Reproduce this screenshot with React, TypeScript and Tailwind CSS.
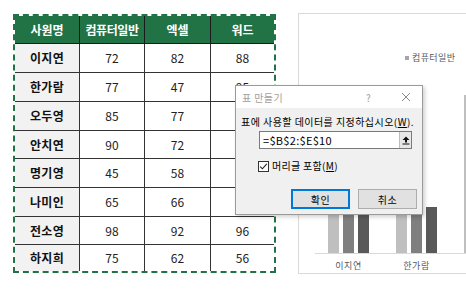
import React from "react";

const rows: [string, number, number, number][] = [
  ["이지연", 72, 82, 88],
  ["한가람", 77, 47, 95],
  ["오두영", 85, 77, 80],
  ["안치연", 90, 72, 85],
  ["명기영", 45, 58, 70],
  ["나미인", 65, 66, 73],
  ["전소영", 98, 92, 96],
  ["하지희", 75, 62, 56],
];
const rowH = [29, 29, 29, 28, 29, 29, 28, 26];

const font = { fontFamily: '"Noto Sans CJK KR", "Noto Sans", sans-serif' };

function Bars({ h }: { h: [number, number, number] }) {
  return (
    <div className="flex items-end gap-[4px] w-[41px] shrink-0">
      <div className="w-[11px] bg-[#bfbfbf]" style={{ height: h[0] }} />
      <div className="w-[11px] bg-[#7f7f7f]" style={{ height: h[1] }} />
      <div className="w-[11px] bg-[#595959]" style={{ height: h[2] }} />
    </div>
  );
}

export default function App() {
  return (
    <div
      className="relative w-[466px] h-[291px] overflow-hidden bg-white flex items-start"
      style={font}
    >
      {/* Table */}
      <div className="ml-[13px] mt-[14px] shrink-0 border-2 border-dashed border-[#217346]">
        <div className="grid grid-cols-[64px_65px_66px_64px]">
          {["사원명", "컴퓨터일반", "엑셀", "워드"].map((t, i) => (
            <div
              key={t}
              className={`h-[28px] bg-[#217346] text-white font-bold text-[12px] flex items-center justify-center border-b border-[#1a1a1a] ${
                i > 0 ? "border-l" : ""
              } ${i === 1 ? "tracking-[-0.4px]" : ""}`}
            >
              {t}
            </div>
          ))}
          {rows.map((r, ri) =>
            r.map((v, ci) => (
              <div
                key={`${ri}-${ci}`}
                style={{ height: rowH[ri] }}
                className={`flex items-center justify-center border-[#333333] ${
                  ri < rows.length - 1 ? "border-b" : ""
                } ${ci > 0 ? "border-l" : ""} ${
                  ci === 0
                    ? "bg-[#f2f2f2] font-bold text-[12px] text-[#111] tracking-[0.3px]"
                    : "bg-white text-[12px] text-[#222]"
                }`}
              >
                {v}
              </div>
            ))
          )}
        </div>
      </div>

      {/* Chart */}
      <div className="ml-[22px] mt-[13px] w-[200px] h-[261px] shrink-0 border border-[#d9d9d9] flex flex-col">
        <div className="h-[40px] pt-[26px] pl-[106px] flex items-center gap-[3px] text-[9px] tracking-[0.4px] text-[#595959] leading-[14px] box-content">
          <span className="w-[4px] h-[4px] bg-[#a6a6a6] shrink-0" />
          <span>컴퓨터일반</span>
        </div>
        <div className="ml-[16px] h-[195px] border-b border-[#d9d9d9] flex items-end pl-[13px] gap-[27px] overflow-hidden">
          <Bars h={[130, 150, 160]} />
          <Bars h={[138, 84, 46]} />
          <Bars h={[158, 120, 130]} />
        </div>
        <div className="ml-[29px] mt-[5px] flex gap-[27px] text-[9px] tracking-[0.5px] text-[#595959] leading-[14px]">
          <div className="w-[41px] text-center">이지연</div>
          <div className="w-[41px] text-center">한가람</div>
        </div>
      </div>

      {/* Dialog */}
      <div className="absolute left-[235px] top-[85px] w-[188px] h-[130px] border border-[#9a9a9a] bg-[#f0f0f0] shadow-[2px_2px_4px_rgba(0,0,0,0.18)] flex flex-col">
        <div className="h-[22px] bg-white flex items-center pl-[6px] text-[10px] text-[#a0a0a0] shrink-0">
          <span className="w-[124px] tracking-[0.4px]">표 만들기</span>
          <span className="text-[10px] text-[#9a9a9a]">?</span>
          <svg className="ml-[30px]" width="10" height="10" viewBox="0 0 10 10">
            <path d="M1 1 L9 9 M9 1 L1 9" stroke="#8a8a8a" strokeWidth="1" />
          </svg>
        </div>
        <div className="pl-[5px] mt-[7px] text-[10px] tracking-[0.45px] leading-[14px] text-black whitespace-nowrap">
          표에 사용할 데이터를 지정하십시오(<span className="underline">W</span>).
        </div>
        <div className="ml-[23px] mt-[2px] w-[153px] h-[18px] border border-[#7a7a7a] bg-white flex items-center">
          <span className="pl-[3px] text-[11px] tracking-[0.3px] text-black flex-1 leading-[14px]">
            =$B$2:$E$10
          </span>
          <div className="w-[12px] h-full bg-[#e8e8e8] border-l border-[#bdbdbd] flex items-center justify-center">
            <svg width="8" height="9" viewBox="0 0 8 9">
              <path d="M4 0.5 L7.5 4 L5 4 L5 6.5 L3 6.5 L3 4 L0.5 4 Z" fill="#111" />
              <rect x="0.5" y="7.5" width="7" height="1" fill="#111" />
            </svg>
          </div>
        </div>
        <div className="ml-[22px] mt-[10px] flex items-center gap-[3px]">
          <div className="w-[11px] h-[11px] border border-[#333] bg-white flex items-center justify-center">
            <svg width="9" height="9" viewBox="0 0 9 9">
              <path d="M1.2 4.6 L3.4 6.8 L7.8 1.8" stroke="#222" strokeWidth="1.1" fill="none" />
            </svg>
          </div>
          <span className="text-[10px] tracking-[0.3px] leading-[14px] text-black">
            머리글 포함(<span className="underline">M</span>)
          </span>
        </div>
        <div className="ml-[55px] mt-[16px] flex gap-[8px]">
          <div className="w-[59px] h-[20px] bg-[#e1e1e1] border border-[#0078d7] shadow-[inset_0_0_0_1px_#0078d7] flex items-center justify-center text-[10px] tracking-[0.5px] text-black">
            확인
          </div>
          <div className="w-[59px] h-[20px] bg-[#e1e1e1] border border-[#adadad] flex items-center justify-center text-[10px] tracking-[0.5px] text-black">
            취소
          </div>
        </div>
      </div>
    </div>
  );
}
